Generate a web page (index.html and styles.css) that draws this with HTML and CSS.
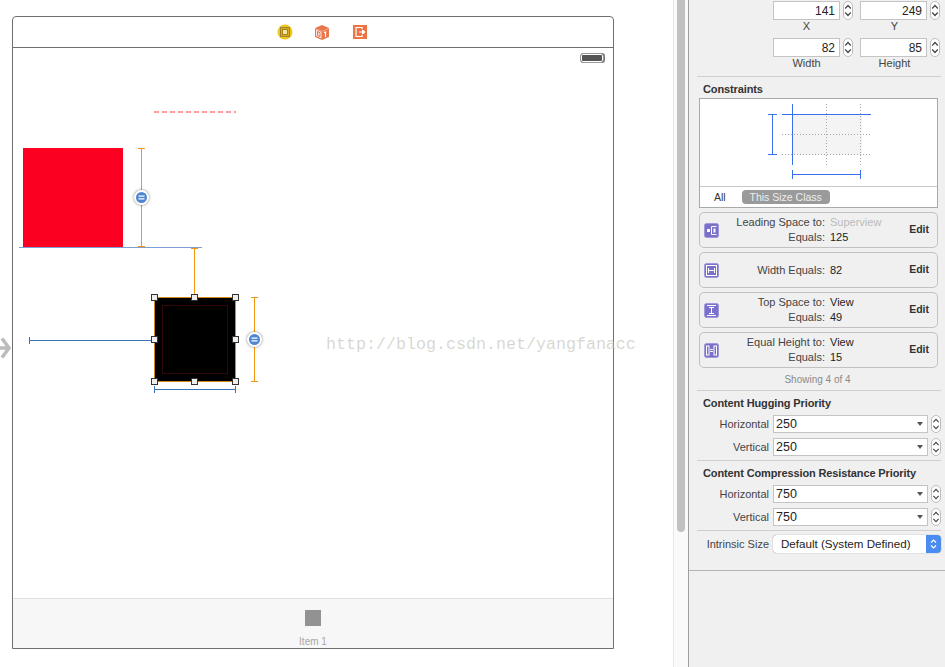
FILE: index.html
```html
<!DOCTYPE html>
<html lang="en">

<head>
    <meta charset="UTF-8">
    <meta name="viewport" content="width=device-width, initial-scale=1.0">
    <title>Storyboard</title>
    <link rel="stylesheet" href="styles.css">
</head>

<body>
    <svg class="defs" width="0" height="0">
        <symbol id="chevrons" viewBox="0 0 8 17">
            <path d="M1.200 6.500 4 3.500 6.800 6.500M1.200 10.500 4 13.500 6.800 10.500" fill="none" stroke="#444" stroke-width="1.200" />
        </symbol>
    </svg>

    <div id="app">
        <!-- storyboard -->
        <main class="canvas">
            <div class="scene">
                <div class="scene-bar">
                    <svg class="bar-icon" width="16" height="16" viewBox="0 0 16 16">
                        <circle cx="8" cy="8" r="7.500" fill="#f3c41c" />
                        <rect x="3.500" y="3.500" width="9" height="9" fill="#d9ae1c" stroke="#9c8427" />
                        <rect x="5.500" y="5.500" width="5" height="5" fill="#f7e79a" stroke="#9c8427" />
                    </svg>
                    <svg class="bar-icon cube" width="16" height="16" viewBox="0 0 16 16">
                        <path d="M1 4 8 1l7 3v9l-7 3-7-3z" fill="#e9754c" />
                        <path d="M2 5.500 7.500 8v6.500L2 12z" fill="#fbe3da" />
                        <path d="M3.500 7.500 6 8.700v3.800L3.500 11.300z" fill="none" stroke="#e9754c" />
                        <path d="M10 8.500 11.500 8v5" fill="none" stroke="#fff" stroke-width="1.200" />
                        <path d="M8 7.400 15 4.400M1 4.400 8 7.400" stroke="#f6b9a2" stroke-width=".7" />
                    </svg>
                    <svg class="bar-icon exit" width="14" height="14" viewBox="0 0 14 14">
                        <rect width="14" height="14" fill="#ee7445" />
                        <path d="M9 4V2.500H3v9h6V10" fill="none" stroke="#fff" stroke-width="1.200" />
                        <path d="M6 7h5M9.500 5l2.500 2-2.500 2z" fill="#fff" stroke="#fff" />
                    </svg>
                </div>
                <div class="scene-body"></div>
                <div class="scene-tabs">
                    <div class="tab-square"></div>
                    <div class="tab-label">Item 1</div>
                </div>
            </div>

            <div class="battery"></div>
            <div class="red-view"></div>
            <div class="black-view">
                <div class="black-inner"></div>
            </div>

            <svg class="guides" width="673" height="667" viewBox="0 0 673 667">
                <path class="entry" d="M-2 348H8M2 338.500 9 348 2 357.500" />
                <path class="dash" d="M154 112H236" />
                <path class="thin-blue" d="M19 247.500H202" />
                <path class="orange" d="M141.500 148V247M138 148.500H145M138 246.500H145" />
                <path class="orange" d="M194.500 248V297M191 248.500H198" />
                <path class="orange" d="M254.500 297.500V381.500M251 297.500H258M251 381.500H258" />
                <path class="blue" d="M29.500 340.500H154M29.500 337V344" />
                <path class="blue" d="M154.500 389.500H235.500M154.500 386V393M235.500 386V393" />
            </svg>

            <div class="equal-pin pin-red">
                <svg class="equal-sign" width="11" height="11" viewBox="0 0 11 11">
                    <path d="M2.500 4.200H8.500M2.500 6.800H8.500" stroke="#fff" stroke-width="1.300" />
                </svg>
            </div>
            <div class="equal-pin pin-black">
                <svg class="equal-sign" width="11" height="11" viewBox="0 0 11 11">
                    <path d="M2.500 4.200H8.500M2.500 6.800H8.500" stroke="#fff" stroke-width="1.300" />
                </svg>
            </div>

            <div class="handle h1"></div>
            <div class="handle h2"></div>
            <div class="handle h3"></div>
            <div class="handle h4"></div>
            <div class="handle h5"></div>
            <div class="handle h6"></div>
            <div class="handle h7"></div>
            <div class="handle h8"></div>

            <div class="watermark">http://blog.csdn.net/yangfanacc</div>
        </main>

        <div class="scroll-track">
            <div class="scroll-thumb"></div>
        </div>

        <!-- inspector -->
        <aside class="inspector">
            <section class="size-part">
                <div class="size-row">
                    <div class="field">
                        <div class="field-top">
                            <div class="num">141</div>
                            <svg class="stepper"><use href="#chevrons" /></svg>
                        </div>
                        <div class="field-label">X</div>
                    </div>
                    <div class="field wide">
                        <div class="field-top">
                            <div class="num">249</div>
                            <svg class="stepper"><use href="#chevrons" /></svg>
                        </div>
                        <div class="field-label">Y</div>
                    </div>
                </div>
                <div class="size-row">
                    <div class="field">
                        <div class="field-top">
                            <div class="num">82</div>
                            <svg class="stepper"><use href="#chevrons" /></svg>
                        </div>
                        <div class="field-label">Width</div>
                    </div>
                    <div class="field wide">
                        <div class="field-top">
                            <div class="num">85</div>
                            <svg class="stepper"><use href="#chevrons" /></svg>
                        </div>
                        <div class="field-label">Height</div>
                    </div>
                </div>
            </section>

            <section class="part constraints-part">
                <h3>Constraints</h3>
                <div class="constraint-box">
                    <svg class="constraint-map" width="237" height="87" viewBox="700 99 237 87">
                        <rect x="793" y="114" width="69" height="41" fill="#f4f4f4" />
                        <path class="dots" d="M826.500 104V165M860.500 104V165M782 134.500H871M782 154.500H871" />
                        <path class="map-blue" d="M782 114.500H871M792.500 104V165" />
                        <path class="map-blue" d="M772.500 114.500V154.500M768 114.500H777M768 154.500H777" />
                        <path class="map-blue" d="M792.500 174.500H860.500M792.500 170V179M860.500 170V179" />
                    </svg>
                    <div class="size-tabs">
                        <span class="tab-all">All</span>
                        <span class="tab-pill">This Size Class</span>
                    </div>
                </div>

                <div class="card">
                    <svg class="card-icon" viewBox="0 0 15 15">
                        <rect x=".5" y=".5" width="14" height="14" rx="2" fill="#7a70c8" stroke="#9f98dc" />
                        <path d="M12.500 3.500H7.500V11.500H12.500" fill="none" stroke="#fff" />
                        <rect x="3" y="6" width="3" height="3" fill="#fff" />
                        <path d="M9.500 5.500h2v4h-2z" fill="#fff" />
                    </svg>
                    <div class="card-lines">
                        <div class="line"><span class="key">Leading Space to:</span><span class="val faded">Superview</span></div>
                        <div class="line"><span class="key">Equals:</span><span class="val">125</span></div>
                    </div>
                    <span class="edit">Edit</span>
                </div>
                <div class="card">
                    <svg class="card-icon" viewBox="0 0 15 15">
                        <rect x=".5" y=".5" width="14" height="14" rx="2" fill="#7a70c8" stroke="#9f98dc" />
                        <rect x="2.500" y="2.500" width="10" height="10" fill="none" stroke="#fff" />
                        <path d="M4.500 5v5M10.500 5v5M4.500 7.500h6" stroke="#fff" fill="none" />
                    </svg>
                    <div class="card-lines">
                        <div class="line"><span class="key">Width Equals:</span><span class="val">82</span></div>
                    </div>
                    <span class="edit">Edit</span>
                </div>
                <div class="card">
                    <svg class="card-icon" viewBox="0 0 15 15">
                        <rect x=".5" y=".5" width="14" height="14" rx="2" fill="#7a70c8" stroke="#9f98dc" />
                        <path d="M3 2.500h9M3 12.500h9M5 4.500h5M5 10.500h5M7.500 4.500v6" stroke="#fff" fill="none" />
                    </svg>
                    <div class="card-lines">
                        <div class="line"><span class="key">Top Space to:</span><span class="val">View</span></div>
                        <div class="line"><span class="key">Equals:</span><span class="val">49</span></div>
                    </div>
                    <span class="edit">Edit</span>
                </div>
                <div class="card">
                    <svg class="card-icon" viewBox="0 0 15 15">
                        <rect x=".5" y=".5" width="14" height="14" rx="2" fill="#7a70c8" stroke="#9f98dc" />
                        <rect x="2.500" y="3" width="2.500" height="9" fill="none" stroke="#fff" />
                        <rect x="10" y="3" width="2.500" height="9" fill="none" stroke="#fff" />
                        <path d="M6.200 6.500h2.600M6.200 8.500h2.600" stroke="#fff" fill="none" />
                    </svg>
                    <div class="card-lines">
                        <div class="line"><span class="key">Equal Height to:</span><span class="val">View</span></div>
                        <div class="line"><span class="key">Equals:</span><span class="val">15</span></div>
                    </div>
                    <span class="edit">Edit</span>
                </div>
                <div class="showing">Showing 4 of 4</div>
            </section>

            <section class="part priority-part">
                <h3>Content Hugging Priority</h3>
                <div class="prio-row">
                    <span class="prio-label">Horizontal</span>
                    <div class="combo">250</div>
                    <svg class="stepper"><use href="#chevrons" /></svg>
                </div>
                <div class="prio-row">
                    <span class="prio-label">Vertical</span>
                    <div class="combo">250</div>
                    <svg class="stepper"><use href="#chevrons" /></svg>
                </div>
            </section>

            <section class="part priority-part">
                <h3>Content Compression Resistance Priority</h3>
                <div class="prio-row">
                    <span class="prio-label">Horizontal</span>
                    <div class="combo">750</div>
                    <svg class="stepper"><use href="#chevrons" /></svg>
                </div>
                <div class="prio-row">
                    <span class="prio-label">Vertical</span>
                    <div class="combo">750</div>
                    <svg class="stepper"><use href="#chevrons" /></svg>
                </div>
            </section>

            <section class="part intrinsic-part">
                <div class="prio-row">
                    <span class="prio-label">Intrinsic Size</span>
                    <div class="popup">
                        <span class="popup-text">Default (System Defined)</span>
                        <span class="popup-arrows">
                            <svg width="15" height="18" viewBox="0 0 15 18">
                                <path d="M5 7.500 7.500 5 10 7.500M5 10.500 7.500 13 10 10.500" fill="none" stroke="#fff" stroke-width="1.200" />
                            </svg>
                        </span>
                    </div>
                </div>
            </section>

            <div class="inspector-rest"></div>
        </aside>
    </div>
</body>

</html>
```

FILE: styles.css
```css
* {
    margin: 0;
    padding: 0;
    box-sizing: border-box;
}

html,
body {
    height: 100%;
    overflow: hidden;
    background-color: white;
}

body {
    font-family: "Liberation Sans", Arial, sans-serif;
    font-size: 11px;
    color: #333;
}

.defs {
    display: block;
}

#app {
    display: flex;
    width: 945px;
    height: 667px;
}

/* storyboard */
.canvas {
    position: relative;
    width: 673px;
    height: 667px;
    padding: 16px 0 0 12px;
    overflow: hidden;
}

.scene {
    display: flex;
    flex-direction: column;
    width: 602px;
    height: 633px;
    border: 1px solid #6f6f6f;
    border-radius: 4px 4px 0 0;
}

.scene-bar {
    display: flex;
    align-items: center;
    gap: 22px;
    height: 31px;
    padding: 0 0 0 264px;
    border-bottom: 1px solid #6f6f6f;
}

.cube {
    margin-left: -1px;
}

.exit {
    margin-left: 1px;
}

.scene-body {
    flex: 1;
}

.scene-tabs {
    display: flex;
    flex-direction: column;
    align-items: center;
    height: 50px;
    padding-top: 11px;
    background-color: #f7f7f7;
    border-top: 1px solid #e0e0e0;
}

.tab-square {
    width: 16px;
    height: 16px;
    background-color: #929292;
}

.tab-label {
    margin-top: 10px;
    font-size: 10px;
    line-height: 12px;
    color: #a8a8a8;
}

.battery {
    position: absolute;
    left: 580px;
    top: 53px;
    width: 24px;
    height: 10px;
    background-color: #555;
    border: 1px solid #999;
    border-radius: 3px;
    box-shadow: inset 0 0 0 1px white, 1px 0 0 0 #777;
}

.red-view {
    position: absolute;
    left: 23px;
    top: 148px;
    width: 100px;
    height: 99px;
    background-color: #fb0021;
}

.black-view {
    position: absolute;
    left: 154px;
    top: 297px;
    width: 82px;
    height: 85px;
    padding: 7px;
    background-color: black;
    border: 1px solid #d08a20;
}

.black-inner {
    width: 66px;
    height: 69px;
    border: 1px solid #300808;
}

.guides {
    position: absolute;
    left: 0;
    top: 0;
    fill: none;
}

.entry {
    stroke: #bcbcbc;
    stroke-width: 3.500;
}

.dash {
    stroke: #ff9c9c;
    stroke-width: 2;
    stroke-dasharray: 5 3;
}

.thin-blue {
    stroke: #7d9fd3;
}

.orange {
    stroke: #f4960f;
}

.blue {
    stroke: #3a72b8;
}

.equal-pin {
    position: absolute;
    width: 15px;
    height: 15px;
    background-color: #4f86d2;
    border: 2px solid white;
    border-radius: 50%;
    box-shadow: 0 0 3px rgba(0, 0, 0, 0.5);
}

.equal-sign {
    display: block;
}

.pin-red {
    left: 134px;
    top: 190px;
}

.pin-black {
    left: 247px;
    top: 332px;
}

.handle {
    position: absolute;
    width: 7px;
    height: 7px;
    background-color: #eee;
    border: 1px solid #333;
}

.h1 { left: 151px; top: 294px; }
.h2 { left: 191px; top: 294px; }
.h3 { left: 232px; top: 294px; }
.h4 { left: 151px; top: 336px; }
.h5 { left: 232px; top: 336px; }
.h6 { left: 151px; top: 378px; }
.h7 { left: 191px; top: 378px; }
.h8 { left: 232px; top: 378px; }

.watermark {
    position: absolute;
    left: 326px;
    top: 335px;
    font-family: "Liberation Mono", monospace;
    font-size: 16.67px;
    line-height: 20px;
    color: rgba(190, 190, 178, 0.6);
    white-space: nowrap;
}

.scroll-track {
    width: 15px;
    height: 667px;
    padding-left: 3px;
    background-color: #fafafa;
    border-left: 1px solid #e8e8e8;
}

.scroll-thumb {
    width: 8px;
    height: 532px;
    background-color: #c1c1c1;
    border-radius: 0 0 4px 4px;
}

/* inspector */
.inspector {
    display: flex;
    flex-direction: column;
    width: 257px;
    height: 667px;
    background-color: #f0f0f0;
    border-left: 1px solid #9f9f9f;
}

.size-part {
    height: 76px;
    padding: 1px 0 0 84px;
}

.size-row {
    display: flex;
    gap: 7px;
    height: 37px;
}

.field {
    width: 80px;
}

.field-top {
    display: flex;
    gap: 3px;
}

.num {
    width: 67px;
    height: 19px;
    padding-right: 4px;
    font-size: 12px;
    line-height: 18px;
    text-align: right;
    color: #222;
    background-color: white;
    border: 1px solid #c4c4c4;
}

.wide .num {
    width: 69px;
}

.stepper {
    flex: none;
    width: 10px;
    height: 19px;
    background-color: white;
    border: 1px solid #bdbdbd;
    border-radius: 5px;
}

.field-label {
    width: 67px;
    margin-top: -1px;
    line-height: 14px;
    text-align: center;
    color: #444;
}

.wide .field-label {
    width: 69px;
}

.part {
    margin-left: 8px;
    margin-right: 4px;
    border-top: 1px solid #cfcfcf;
}

h3 {
    padding-left: 6px;
    font-size: 11px;
    line-height: 13px;
    letter-spacing: -0.120px;
    color: #333;
}

.constraints-part {
    height: 314px;
    padding-top: 6px;
}

.constraint-box {
    width: 239px;
    height: 110px;
    margin: 2px 0 4px 2px;
    background-color: white;
    border: 1px solid #a9a9a9;
}

.constraint-map {
    display: block;
    height: 87px;
}

.dots {
    fill: none;
    stroke: #a8a8a8;
    stroke-dasharray: 1 2;
}

.map-blue {
    fill: none;
    stroke: #3a6ff0;
}

.size-tabs {
    display: flex;
    align-items: center;
    height: 21px;
    padding-left: 14px;
    gap: 16px;
    border-top: 1px solid #c9c9c9;
}

.tab-all {
    font-size: 10.500px;
    color: #333;
}

.tab-pill {
    width: 88px;
    height: 14px;
    font-size: 10.500px;
    line-height: 14px;
    text-align: center;
    color: #eee;
    background-color: #9a9a9a;
    border-radius: 4px;
}

.card {
    display: flex;
    align-items: center;
    width: 239px;
    height: 36px;
    margin: 0 0 4px 2px;
    padding: 0 8px 0 4px;
    border: 1px solid #c2c2c2;
    border-radius: 5px;
}

.card-icon {
    flex: none;
    width: 15px;
    height: 15px;
}

.card-lines {
    flex: 1;
}

.line {
    display: flex;
    line-height: 15px;
}

.key {
    width: 106px;
    text-align: right;
    color: #444;
}

.val {
    margin-left: 5px;
    color: #222;
}

.faded {
    color: #bbb;
}

.edit {
    margin-top: -2px;
    font-size: 10.500px;
    font-weight: bold;
    color: #333;
}

.showing {
    margin-top: 6px;
    font-size: 10px;
    line-height: 12px;
    text-align: center;
    padding-right: 3px;
    color: #8a8a8a;
}

.priority-part {
    height: 70px;
    padding-top: 6px;
}

.prio-row {
    display: flex;
    align-items: center;
    gap: 3px;
    height: 18px;
    margin-bottom: 5px;
}

h3 + .prio-row {
    margin-top: 5px;
}

.prio-label {
    width: 72px;
    margin-right: 1px;
    text-align: right;
    color: #444;
}

.combo {
    position: relative;
    width: 155px;
    height: 18px;
    padding-left: 2px;
    font-size: 12.500px;
    line-height: 17px;
    color: #222;
    background-color: white;
    border: 1px solid #c4c4c4;
}

.combo::after {
    content: "";
    position: absolute;
    right: 4px;
    top: 6px;
    border-left: 3.500px solid transparent;
    border-right: 3.500px solid transparent;
    border-top: 4px solid #555;
}

.prio-row .stepper {
    height: 18px;
}

.intrinsic-part {
    height: 40px;
    padding-top: 4px;
}

.popup {
    display: flex;
    width: 168px;
    height: 18px;
    overflow: hidden;
    background-color: white;
    border-radius: 4px;
    box-shadow: 0 0 1px 0 rgba(0, 0, 0, 0.6);
}

.popup-text {
    flex: 1;
    padding-left: 8px;
    font-size: 11.600px;
    line-height: 18px;
    color: #222;
}

.popup-arrows {
    width: 15px;
    height: 18px;
    background-color: #4a8cf0;
}

.popup-arrows svg {
    display: block;
}

.inspector-rest {
    flex: 1;
    border-top: 1px solid #b5b5b5;
}
```
